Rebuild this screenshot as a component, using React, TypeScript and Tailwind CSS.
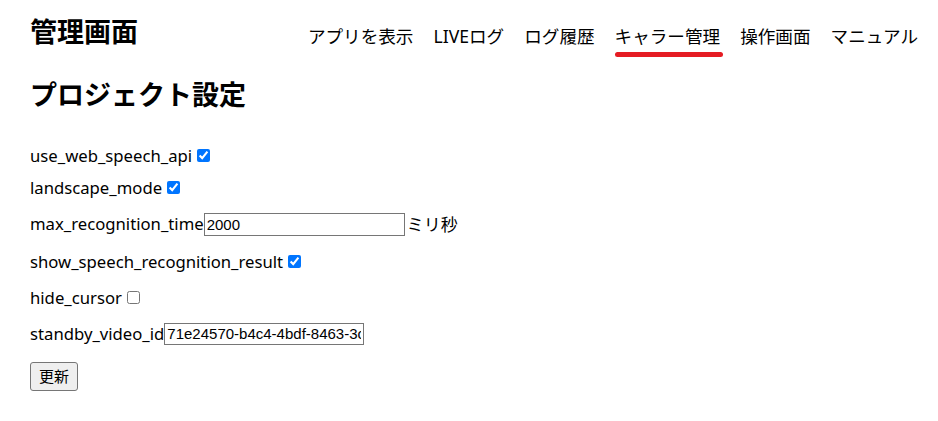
import React from "react";

const navItems = [
  "アプリを表示",
  "LIVEログ",
  "ログ履歴",
  "キャラー管理",
  "操作画面",
  "マニュアル",
];

const ACTIVE = "キャラー管理";

const font = "font-['Noto_Sans','Noto_Sans_CJK_JP',sans-serif]";

const CheckRow: React.FC<{ label: string; checked: boolean; h: string }> = ({
  label,
  checked,
  h,
}) => (
  <div className={`flex items-center ${h}`}>
    <label className="flex items-center">
      <span>{label}</span>
      <input
        type="checkbox"
        defaultChecked={checked}
        className="ml-[5px] w-[13px] h-[13px] accent-[#0075ff]"
      />
    </label>
  </div>
);

export default function App() {
  return (
    <div className={`${font} text-black bg-white w-[938px] h-[421px] overflow-hidden`}>
      {/* header */}
      <div className="flex justify-between items-start h-[64px] pl-[30px] pr-[20px]">
        <h1 className="pt-[19px] text-[27px] leading-[26px] font-bold">管理画面</h1>
        <nav className="flex gap-[20px] pt-[27px]">
          {navItems.map((item) => (
            <div key={item} className="flex flex-col">
              <span className="text-[17.6px] leading-[18px] whitespace-nowrap">{item}</span>
              <div
                className={`mt-[7px] h-[5px] -mr-[3px] rounded-full ${
                  item === ACTIVE ? "bg-[#e51c23]" : "bg-transparent"
                }`}
              />
            </div>
          ))}
        </nav>
      </div>

      <div className="px-[30px]">
        <h2 className="pt-[18px] text-[27px] leading-[26px] font-bold">プロジェクト設定</h2>

        <div className="mt-[32px] flex flex-col text-[16.7px]">
          <CheckRow label="use_web_speech_api" checked h="h-[32px]" />
          <CheckRow label="landscape_mode" checked h="h-[32px]" />
          <div className="flex items-center h-[40px]">
            <span>max_recognition_time</span>
            <input
              type="text"
              defaultValue="2000"
              className="w-[201px] h-[23px] border border-[#767676] px-[2px] font-['Liberation_Sans',Arial,sans-serif] text-[15px] outline-none"
            />
            <span className="ml-[2px] text-[17px] font-['Noto_Sans_CJK_JP',sans-serif]">ミリ秒</span>
          </div>
          <CheckRow label="show_speech_recognition_result" checked h="h-[36px]" />
          <CheckRow label="hide_cursor" checked={false} h="h-[36px]" />
          <div className="flex items-center h-[36px]">
            <span>standby_video_id</span>
            <input
              type="text"
              defaultValue="71e24570-b4c4-4bdf-8463-3c0a9d2f1e77"
              className="w-[200px] h-[22px] border border-[#767676] px-[2px] font-['Liberation_Sans',Arial,sans-serif] text-[15px] outline-none"
            />
          </div>
        </div>

        <button className="mt-[10px] w-[48px] h-[29px] bg-[#efefef] border border-[#767676] rounded-[3px] text-[15px] leading-none">
          更新
        </button>
      </div>
    </div>
  );
}
